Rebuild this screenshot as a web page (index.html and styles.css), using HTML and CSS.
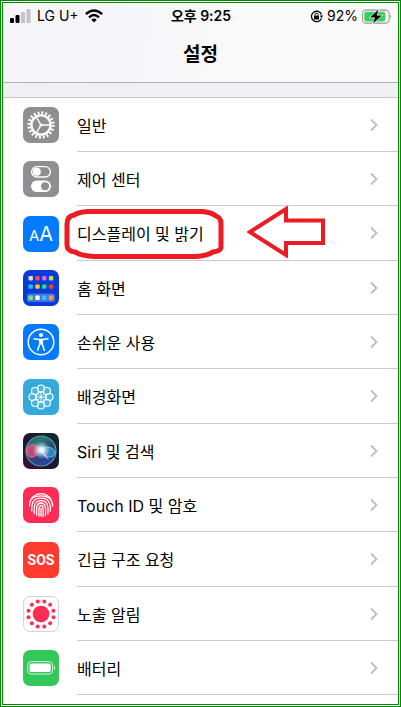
FILE: index.html
```html
<!DOCTYPE html>
<html lang="ko">
<head>
    <meta charset="UTF-8">
    <meta name="viewport" content="width=device-width, initial-scale=1.0">
    <title>설정</title>
    <link rel="stylesheet" href="styles.css">
</head>
<body>
    <!-- 공통 화살표 -->
    <svg class="defs" width="0" height="0" aria-hidden="true">
        <symbol id="chevron" viewBox="0 0 10 14">
            <path d="M2 1.5 L7.5 7 L2 12.5" fill="none" stroke="#bdbdc0" stroke-width="1.8"/>
        </symbol>
    </svg>

    <div class="screen">
        <header class="header">
            <div class="status-bar">
                <div class="status-left">
                    <svg width="21" height="14" viewBox="0 0 21 14" aria-hidden="true">
                        <rect x="0" y="9" width="4" height="5" rx="1" fill="#000"/>
                        <rect x="5.5" y="6" width="4" height="8" rx="1" fill="#000"/>
                        <rect x="11" y="3" width="4" height="11" rx="1" fill="#c4c4c8"/>
                        <rect x="16.5" y="0" width="4" height="14" rx="1" fill="#c4c4c8"/>
                    </svg>
                    <span>LG U+</span>
                    <svg width="18" height="14" viewBox="0 0 18 14" aria-hidden="true">
                        <g fill="none" stroke="#000" stroke-width="2.4">
                            <path d="M0.9 5.1 Q9 -2.2 17.1 5.1"/>
                            <path d="M4 8.3 Q9 3.7 14 8.3"/>
                        </g>
                        <path d="M6.3 10.7 Q9 8.4 11.7 10.7 L9 13.5 Z" fill="#000"/>
                    </svg>
                </div>
                <div class="status-time">오후 9:25</div>
                <div class="status-right">
                    <svg width="13" height="13" viewBox="0 0 13 13" aria-hidden="true">
                        <path d="M11.4 8.6 A5.2 5.2 0 1 1 11.5 4.6" fill="none" stroke="#000" stroke-width="1.3"/>
                        <path d="M9.8 5.6 L13 5.6 L11.6 8.2 Z" fill="#000"/>
                        <rect x="4" y="5.8" width="5" height="3.8" rx="0.6" fill="#000"/>
                        <path d="M5 6 V4.7 A1.5 1.5 0 0 1 8 4.7 V6" fill="none" stroke="#000"/>
                    </svg>
                    <span>92%</span>
                    <svg width="30" height="15" viewBox="0 0 30 15" aria-hidden="true">
                        <rect x="0.6" y="1.1" width="26.5" height="13" rx="3.8" fill="#fff" stroke="#95959a" stroke-width="1.1"/>
                        <rect x="2.3" y="2.8" width="21" height="9.6" rx="2.2" fill="#35d158"/>
                        <path d="M28.3 5.2 Q30 7.5 28.3 10 Z" fill="#95959a"/>
                        <path d="M16.5 0.6 L8 8.6 H13 L11 14.5 L20 6.4 H14.8 Z" fill="#000" stroke="#fff" stroke-width="1.2" paint-order="stroke"/>
                    </svg>
                </div>
            </div>
            <h1 class="title">설정</h1>
        </header>

        <ul class="settings">
            <li class="row">
                <svg class="icon gray" viewBox="0 0 36 36" aria-hidden="true">
                    <circle cx="18" cy="18" r="12.2" fill="none" stroke="#fff" stroke-width="3" stroke-dasharray="1.9 1.933"/>
                    <circle cx="18" cy="18" r="9.6" fill="none" stroke="#fff" stroke-width="2.4"/>
                    <path d="M18 18 H27 M18 18 L13.4 10.2 M18 18 L13.4 25.8" stroke="#fff" stroke-width="1.4"/>
                    <circle cx="18" cy="18" r="1.6" fill="#fff"/>
                </svg>
                <a class="label" href="#">일반<svg class="chevron" aria-hidden="true"><use href="#chevron"/></svg></a>
            </li>
            <li class="row">
                <svg class="icon gray" viewBox="0 0 36 36" aria-hidden="true">
                    <rect x="8.6" y="5.6" width="18.8" height="10.4" rx="5.2" fill="none" stroke="#fff" stroke-width="1.4"/>
                    <circle cx="13.8" cy="10.8" r="4" fill="#fff"/>
                    <rect x="8" y="19.5" width="20" height="11.6" rx="5.8" fill="#fff"/>
                    <circle cx="22.1" cy="25.3" r="4" fill="#8e8e93"/>
                </svg>
                <a class="label" href="#">제어 센터<svg class="chevron" aria-hidden="true"><use href="#chevron"/></svg></a>
            </li>
            <li class="row">
                <span class="icon blue letters"><small>A</small>A</span>
                <a class="label" href="#">디스플레이 및 밝기<svg class="chevron" aria-hidden="true"><use href="#chevron"/></svg></a>
                <!-- 강조 표시 -->
                <svg class="mark-box" viewBox="0 0 160 52" aria-hidden="true">
                    <path d="M24 3.5 H138 Q147 4 152 8 Q157 10 157 15 V39 Q157 43 149 44 Q142 48 132 48.500 H30 Q18 48 11 44 Q3 43 3 37 V16 Q3 8 10 7 Q15 4 24 3.5 Z"/>
                </svg>
                <svg class="mark-arrow" viewBox="0 0 78 52" aria-hidden="true">
                    <path d="M3 26 L39 3 V14.5 H76 V37 H39 V49 Z"/>
                </svg>
            </li>
            <li class="row">
                <svg class="icon navy" viewBox="0 0 36 36" aria-hidden="true">
                    <rect x="4" y="23.5" width="28" height="8.5" rx="2.5" fill="#4b73e6"/>
                    <rect x="5.5" y="6" width="4.4" height="4.4" rx="1" fill="#e6e1d5"/>
                    <rect x="12.3" y="6" width="4.4" height="4.4" rx="1" fill="#ff4557"/>
                    <rect x="19.1" y="6" width="4.4" height="4.4" rx="1" fill="#d269f5"/>
                    <rect x="25.9" y="6" width="4.4" height="4.4" rx="1" fill="#b7e83f"/>
                    <rect x="5.5" y="14.4" width="4.4" height="4.4" rx="1" fill="#27bdfa"/>
                    <rect x="12.3" y="14.4" width="4.4" height="4.4" rx="1" fill="#ffcb13"/>
                    <rect x="19.1" y="14.4" width="4.4" height="4.4" rx="1" fill="#2fdc8d"/>
                    <rect x="25.9" y="14.4" width="4.4" height="4.4" rx="1" fill="#ff3b24"/>
                    <rect x="5.5" y="25.5" width="4.4" height="4.4" rx="1" fill="#5df073"/>
                    <rect x="12.3" y="25.5" width="4.4" height="4.4" rx="1" fill="#fff"/>
                    <rect x="19.1" y="25.5" width="4.4" height="4.4" rx="1" fill="#25cdfa"/>
                    <rect x="25.9" y="25.5" width="4.4" height="4.4" rx="1" fill="#ff9c35"/>
                </svg>
                <a class="label" href="#">홈 화면<svg class="chevron" aria-hidden="true"><use href="#chevron"/></svg></a>
            </li>
            <li class="row">
                <svg class="icon blue" viewBox="0 0 36 36" aria-hidden="true">
                    <circle cx="18" cy="18" r="12.8" fill="none" stroke="#fff" stroke-width="1.5"/>
                    <circle cx="18" cy="11" r="2.1" fill="#fff"/>
                    <path d="M11 14.8 L16 15.6 H20 L25 14.8 M16.8 16 V20 L14.6 26.2 M19.2 16 V20 L21.4 26.2" fill="none" stroke="#fff" stroke-width="1.5" stroke-linecap="round" stroke-linejoin="round"/>
                    <rect x="16.2" y="15" width="3.6" height="5.5" fill="#fff"/>
                </svg>
                <a class="label" href="#">손쉬운 사용<svg class="chevron" aria-hidden="true"><use href="#chevron"/></svg></a>
            </li>
            <li class="row">
                <svg class="icon sky" viewBox="0 0 36 36" aria-hidden="true">
                    <g fill="#6ac5e6" fill-opacity="0.4" stroke="#fff" stroke-width="1.2">
                        <circle cx="18" cy="9.5" r="3.5"/>
                        <circle cx="24" cy="12" r="3.5"/>
                        <circle cx="26.5" cy="18" r="3.5"/>
                        <circle cx="24" cy="24" r="3.5"/>
                        <circle cx="18" cy="26.5" r="3.5"/>
                        <circle cx="12" cy="24" r="3.5"/>
                        <circle cx="9.5" cy="18" r="3.5"/>
                        <circle cx="12" cy="12" r="3.5"/>
                    </g>
                    <g fill="none" stroke="#fff">
                        <circle cx="18" cy="18" r="5"/>
                        <path d="M18 13 V16 M18 20 V23 M13 18 H16 M20 18 H23 M14.5 14.5 L16.5 16.5 M19.5 19.5 L21.5 21.5 M21.5 14.5 L19.5 16.5 M16.5 19.5 L14.5 21.5"/>
                    </g>
                    <circle cx="18" cy="18" r="1.7" fill="#fff"/>
                </svg>
                <a class="label" href="#">배경화면<svg class="chevron" aria-hidden="true"><use href="#chevron"/></svg></a>
            </li>
            <li class="row">
                <svg class="icon" viewBox="0 0 36 36" aria-hidden="true">
                    <defs>
                        <linearGradient id="siri-bg" x1="0" y1="1" x2="1" y2="0">
                            <stop offset="0" stop-color="#3c1038"/>
                            <stop offset="0.5" stop-color="#1b1730"/>
                            <stop offset="1" stop-color="#0c2f31"/>
                        </linearGradient>
                        <linearGradient id="siri-orb" x1="0" y1="0" x2="0.6" y2="1">
                            <stop offset="0" stop-color="#5d4050"/>
                            <stop offset="0.3" stop-color="#267a74"/>
                            <stop offset="0.6" stop-color="#31456f"/>
                            <stop offset="1" stop-color="#2b43a5"/>
                        </linearGradient>
                        <radialGradient id="siri-glow">
                            <stop offset="0" stop-color="#fff"/>
                            <stop offset="0.3" stop-color="#e5f6ff" stop-opacity="0.9"/>
                            <stop offset="1" stop-color="#8fe0ef" stop-opacity="0"/>
                        </radialGradient>
                    </defs>
                    <rect width="36" height="36" fill="url(#siri-bg)"/>
                    <circle cx="18" cy="18" r="15" fill="url(#siri-orb)" stroke="#5b9ea8" stroke-width="1.2"/>
                    <path d="M18 17 C13 9 5 11 3.5 17 C4 25 10 28 18 17 Z" fill="#e9457b" fill-opacity="0.8" stroke="#ff7d9d" stroke-width="0.8"/>
                    <path d="M18 17 C23 12 30 14 32 19 C31 26 23 26 18 17 Z" fill="#38a8e0" fill-opacity="0.6" stroke="#62e0e0" stroke-width="0.8"/>
                    <path d="M18 17 Q23 21 26 27 Q20 24 18 17 Z" fill="#e5a4e4" fill-opacity="0.9"/>
                    <circle cx="18.5" cy="17" r="9" fill="url(#siri-glow)"/>
                </svg>
                <a class="label" href="#">Siri 및 검색<svg class="chevron" aria-hidden="true"><use href="#chevron"/></svg></a>
            </li>
            <li class="row">
                <svg class="icon pink" viewBox="0 0 36 36" aria-hidden="true">
                    <g fill="none" stroke="#fff" stroke-width="1.3" stroke-linecap="round">
                        <path d="M9 10.8 Q18 2.5 27 10.8"/>
                        <path d="M6.5 19 Q6.3 8.8 18 8.8 Q29.700 9 29.600 19"/>
                        <path d="M8.8 24 C8.3 16 10 11.2 18 11.2 C26 11.2 28 17 27.2 24"/>
                        <path d="M11.2 26.3 C10.7 18 11.8 13.6 18 13.6 C24.5 13.6 25.5 19 24.8 27"/>
                        <path d="M13.6 28 C13.3 20 13.5 16 18 16 C22.7 16 23 21 22.4 28.6"/>
                        <path d="M16 29 C15.6 22 15.9 18.5 18 18.5 C20.3 18.5 20.5 22 20 29.3"/>
                        <path d="M18 21.5 V29"/>
                    </g>
                </svg>
                <a class="label" href="#">Touch ID 및 암호<svg class="chevron" aria-hidden="true"><use href="#chevron"/></svg></a>
            </li>
            <li class="row">
                <span class="icon red">SOS</span>
                <a class="label" href="#">긴급 구조 요청<svg class="chevron" aria-hidden="true"><use href="#chevron"/></svg></a>
            </li>
            <li class="row">
                <svg class="icon white" viewBox="0 0 36 36" aria-hidden="true">
                    <g fill="#ff2d55">
                        <circle cx="18" cy="18" r="8.8"/>
                        <circle cx="14.5" cy="4.8" r="2.1"/>
                        <circle cx="21.5" cy="4.8" r="2.1"/>
                        <circle cx="27.7" cy="8.3" r="2.1"/>
                        <circle cx="31.2" cy="14.5" r="2.1"/>
                        <circle cx="31.2" cy="21.5" r="2.1"/>
                        <circle cx="27.7" cy="27.7" r="2.1"/>
                        <circle cx="21.5" cy="31.2" r="2.1"/>
                        <circle cx="14.5" cy="31.2" r="2.1"/>
                        <circle cx="8.3" cy="27.7" r="2.1"/>
                        <circle cx="4.8" cy="21.5" r="2.1"/>
                        <circle cx="4.8" cy="14.5" r="2.1"/>
                        <circle cx="8.3" cy="8.3" r="2.1"/>
                    </g>
                </svg>
                <a class="label" href="#">노출 알림<svg class="chevron" aria-hidden="true"><use href="#chevron"/></svg></a>
            </li>
            <li class="row">
                <svg class="icon green" viewBox="0 0 36 36" aria-hidden="true">
                    <rect x="4.6" y="11.6" width="25" height="12.4" rx="3.4" fill="none" stroke="#d8f5df" stroke-width="1"/>
                    <rect x="6.5" y="13.5" width="21.2" height="8.6" rx="1.8" fill="#fff"/>
                    <path d="M31 15.5 Q33.5 17.8 31 20.2 Z" fill="#d8f5df"/>
                </svg>
                <a class="label" href="#">배터리<svg class="chevron" aria-hidden="true"><use href="#chevron"/></svg></a>
            </li>
        </ul>
    </div>
</body>
</html>
```
FILE: styles.css
```css
* {
    margin: 0;
    padding: 0;
    box-sizing: border-box;
}

body {
    font-family: Inter, 'Noto Sans CJK KR', sans-serif;
    color: #000;
    background: #fff;
}

.defs {
    position: absolute;
}

.screen {
    min-height: 100vh;
    border: 3px double #008a00;
    background: #fff;
}

.header {
    height: 80px;
    background: linear-gradient(100deg, #f5f5fb, #f9f9f9 60%);
    border-bottom: 1px solid #b0b0b3;
}

.status-bar {
    display: grid;
    grid-template-columns: 1fr auto 1fr;
    align-items: center;
    height: 26px;
    padding: 0 6px 0 7px;
    font-size: 14px;
    line-height: 20px;
}

.status-left,
.status-right {
    display: flex;
    align-items: center;
    gap: 6px;
}

.status-right {
    justify-content: flex-end;
    gap: 4px;
}

.status-time {
    font-weight: 600;
}

.title {
    font-size: 19px;
    font-weight: 700;
    line-height: 52px;
    text-align: center;
}

.settings {
    list-style: none;
    margin-top: 14px;
    border-top: 1px solid #c8c8cc;
    box-shadow: 0 -14px 0 #f0f0f5;
}

.row {
    position: relative;
    display: flex;
    align-items: center;
    height: 54px;
    padding-left: 20px;
}

.row:nth-child(3n) {
    height: 55px;
}

.icon {
    flex: none;
    width: 36px;
    height: 36px;
    margin-right: 18px;
    border-radius: 7px;
}

.gray {
    background: #8e8e93;
}

.blue {
    background: #047aff;
}

.navy {
    background: #0a3bd6;
}

.sky {
    background: #34aadc;
}

.pink {
    background: #ff2d55;
}

.red {
    background: #ff3b30;
    color: #fff;
    font-family: Roboto, sans-serif;
    font-size: 14px;
    font-weight: 700;
    line-height: 36px;
    text-align: center;
}

.white {
    background: #fff;
    border: 1px solid #d4d4d6;
}

.green {
    background: #34c759;
}

.letters {
    color: #fff;
    font-size: 20px;
    line-height: 36px;
    text-align: center;
}

.letters small {
    font-size: 15px;
}

.label {
    display: flex;
    flex: 1;
    align-items: center;
    justify-content: space-between;
    align-self: stretch;
    padding-right: 19px;
    border-bottom: 1px solid #cbcbce;
    color: #000;
    font-size: 16px;
    text-decoration: none;
}

.chevron {
    width: 10px;
    height: 14px;
}

.mark-box,
.mark-arrow {
    position: absolute;
    fill: none;
    stroke: #ed1c24;
    stroke-width: 5;
    pointer-events: none;
}

.mark-box {
    top: 2px;
    left: 61px;
    width: 160px;
    height: 52px;
}

.mark-arrow {
    top: 0;
    left: 244px;
    width: 78px;
    height: 52px;
    stroke-width: 4;
}
```
